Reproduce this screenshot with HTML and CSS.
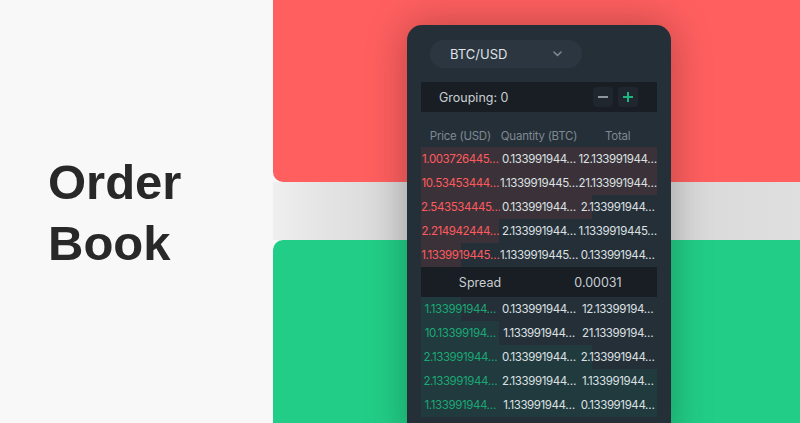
FILE: index.html
```html
<!DOCTYPE html>
<html lang="en">
<head>
<meta charset="utf-8">
<title>Order Book</title>
<link rel="stylesheet" href="styles.css">
</head>
<body>
  <section class="intro">
    <h1 class="title">Order<br>Book</h1>
  </section>
  <section class="stage">
    <div class="block block-red"></div>
    <div class="gap"></div>
    <div class="block block-green"></div>
    <div class="card">
      <div class="pair">
        <span class="pair-name">BTC/USD</span>
        <svg class="chevron" width="9" height="6" viewBox="0 0 9 6"><path d="M1 1l3.5 3.5L8 1" fill="none" stroke="#7d8790" stroke-width="1.6" stroke-linecap="round" stroke-linejoin="round"/></svg>
      </div>
      <div class="grouping">
        <span class="grouping-label">Grouping: 0</span>
        <div class="grouping-btns">
          <span class="gbtn"><svg width="12" height="12" viewBox="0 0 12 12"><path d="M1 6h10" stroke="#8e959c" stroke-width="2"/></svg></span>
          <span class="gbtn"><svg width="12" height="12" viewBox="0 0 12 12"><path d="M1 6h10M6 1v10" stroke="#1fb47d" stroke-width="2"/></svg></span>
        </div>
      </div>
      <div class="thead">
        <span>Price (USD)</span><span>Quantity (BTC)</span><span>Total</span>
      </div>
      <div class="book asks">
        <div class="row ask" style="--d:100%"><span class="price">1.003726445…</span><span>0.133991944…</span><span>12.133991944…</span></div>
        <div class="row ask" style="--d:100%"><span class="price">10.53453444…</span><span>1.1339919445…</span><span>21.133991944…</span></div>
        <div class="row ask" style="--d:72.5%"><span class="price">2.543534445…</span><span>0.133991944…</span><span>2.133991944…</span></div>
        <div class="row ask" style="--d:33%"><span class="price">2.214942444…</span><span>2.133991944…</span><span>1.1339919445…</span></div>
        <div class="row ask" style="--d:17%"><span class="price">1.1339919445…</span><span>1.1339919445…</span><span>0.133991944…</span></div>
      </div>
      <div class="spread">
        <span>Spread</span><span>0.00031</span>
      </div>
      <div class="book bids">
        <div class="row bid" style="--d:17%"><span class="price">1.133991944…</span><span>0.133991944…</span><span>12.13399194…</span></div>
        <div class="row bid" style="--d:33%"><span class="price">10.13399194…</span><span>1.133991944…</span><span>21.13399194…</span></div>
        <div class="row bid" style="--d:72.5%"><span class="price">2.133991944…</span><span>0.133991944…</span><span>2.133991944…</span></div>
        <div class="row bid" style="--d:100%"><span class="price">2.133991944…</span><span>2.133991944…</span><span>1.133991944…</span></div>
        <div class="row bid" style="--d:100%"><span class="price">1.133991944…</span><span>1.133991944…</span><span>0.133991944…</span></div>
      </div>
    </div>
  </section>
</body>
</html>
```

FILE: styles.css
```css
html, body {
  margin: 0;
  padding: 0;
}
body {
  width: 800px;
  height: 423px;
  overflow: hidden;
  display: flex;
  background: #f8f8f8;
  font-family: "Inter", "Noto Sans", sans-serif;
}
.intro {
  width: 273px;
  flex: none;
  display: flex;
  align-items: center;
  padding-left: 48px;
  box-sizing: border-box;
}
.title {
  margin: 2px 0 0;
  font-family: "Liberation Sans", Arial, sans-serif;
  font-weight: 700;
  font-size: 49px;
  line-height: 61px;
  color: #282828;
}
.stage {
  flex: 1;
  display: grid;
  grid-template-columns: 134px 264px 1fr;
  grid-template-rows: 25px 157px 58px 1fr;
}
.block-red {
  grid-column: 1 / -1;
  grid-row: 1 / 3;
  background: #ff5f5f;
  border-bottom-left-radius: 10px;
}
.gap {
  grid-column: 1 / -1;
  grid-row: 3;
  background: linear-gradient(90deg, #efefef 0%, #e4e4e4 50px, #d8d8d8 125px, #d9d9d9 400px, #dfdfdf 100%);
}
.block-green {
  grid-column: 1 / -1;
  grid-row: 4;
  background: #22ce87;
  border-top-left-radius: 10px;
}
.card {
  grid-column: 2;
  grid-row: 2 / 5;
  align-self: start;
  height: 420px;
  z-index: 1;
  background: #252f38;
  border-radius: 15px 15px 0 0;
  padding: 15px 14px 0;
  box-sizing: border-box;
  box-shadow: 0 0 40px rgba(0, 0, 0, 0.28);
  color: #dde1e4;
}
.pair {
  margin-left: 9px;
  width: 152px;
  height: 28px;
  border-radius: 14px;
  background: #2c3640;
  display: flex;
  align-items: center;
  justify-content: space-between;
  padding: 0 20px 0 20px;
  box-sizing: border-box;
  font-size: 13px;
  color: #dfe3e6;
}
.chevron {
  display: block;
}
.grouping {
  margin-top: 14px;
  height: 30px;
  background: #181e24;
  display: flex;
  align-items: center;
  justify-content: space-between;
  padding: 0 19px 0 18px;
  font-size: 12.5px;
  color: #c9ced2;
}
.grouping-btns {
  display: flex;
  gap: 5px;
}
.gbtn {
  width: 20px;
  height: 20px;
  border-radius: 4px;
  background: #1f262d;
  display: flex;
  align-items: center;
  justify-content: center;
}
.gbtn svg {
  display: block;
}
.thead {
  margin-top: 11px;
  height: 24px;
  padding-top: 2px;
  box-sizing: border-box;
  display: grid;
  grid-template-columns: repeat(3, 1fr);
  align-items: center;
  text-align: center;
  font-size: 11.5px;
  letter-spacing: -0.25px;
  color: #7f8992;
}
.row {
  height: 24px;
  display: grid;
  grid-template-columns: repeat(3, 1fr);
  align-items: center;
  text-align: center;
  font-size: 11.5px;
  letter-spacing: -0.4px;
  color: #dde1e4;
}
.row span, .thead span {
  white-space: nowrap;
  overflow: hidden;
  min-width: 0;
}
.ask {
  background: linear-gradient(90deg, #3a3238 var(--d), transparent var(--d));
}
.bid {
  background: linear-gradient(90deg, #203a3d var(--d), transparent var(--d));
}
.ask .price {
  color: #ff5b5f;
}
.bid .price {
  color: #1ca877;
}
.spread {
  height: 30px;
  display: grid;
  grid-template-columns: 1fr 1fr;
  align-items: center;
  text-align: center;
  background: #181e24;
  font-size: 12.5px;
  color: #c9ced2;
}
```
